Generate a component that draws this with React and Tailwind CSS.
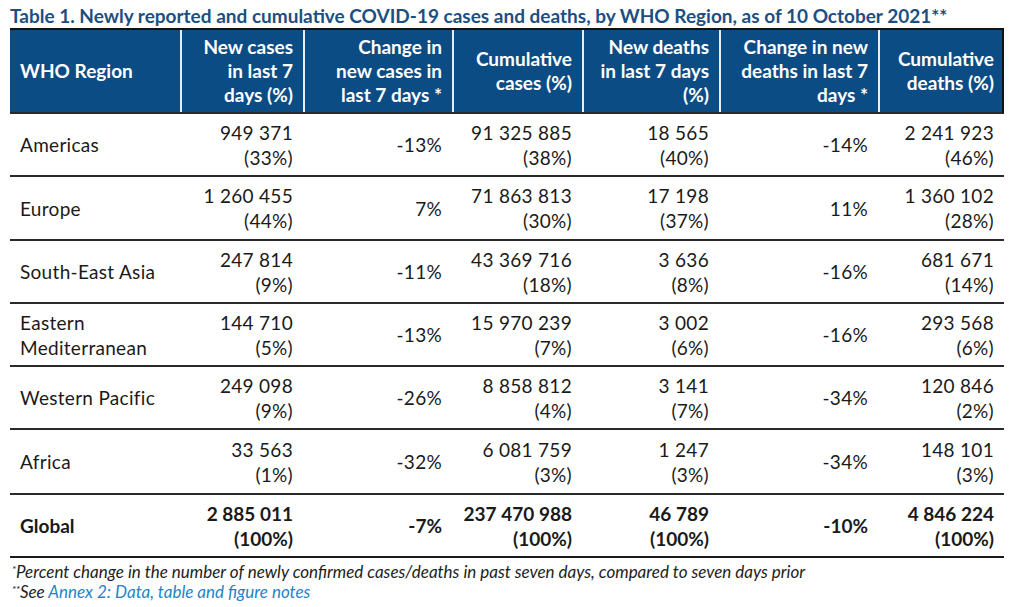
import React from 'react';

const cols = 'grid grid-cols-[170px_123px_149px_130px_137px_159px_126px]';

const rows = [
  ['Americas', ['949 371', '(33%)'], '-13%', ['91 325 885', '(38%)'], ['18 565', '(40%)'], '-14%', ['2 241 923', '(46%)'], 'h-[63px]'],
  ['Europe', ['1 260 455', '(44%)'], '7%', ['71 863 813', '(30%)'], ['17 198', '(37%)'], '11%', ['1 360 102', '(28%)'], 'h-[64px]'],
  ['South-East Asia', ['247 814', '(9%)'], '-11%', ['43 369 716', '(18%)'], ['3 636', '(8%)'], '-16%', ['681 671', '(14%)'], 'h-[63px]'],
  [['Eastern', 'Mediterranean'], ['144 710', '(5%)'], '-13%', ['15 970 239', '(7%)'], ['3 002', '(6%)'], '-16%', ['293 568', '(6%)'], 'h-[63px]'],
  ['Western Pacific', ['249 098', '(9%)'], '-26%', ['8 858 812', '(4%)'], ['3 141', '(7%)'], '-34%', ['120 846', '(2%)'], 'h-[63px]'],
  ['Africa', ['33 563', '(1%)'], '-32%', ['6 081 759', '(3%)'], ['1 247', '(3%)'], '-34%', ['148 101', '(3%)'], 'h-[65px]'],
];

const headers = [
  ['New cases', 'in last 7', 'days (%)'],
  ['Change in', 'new cases in', 'last 7 days *'],
  ['Cumulative', 'cases (%)'],
  ['New deaths', 'in last 7 days', '(%)'],
  ['Change in new', 'deaths in last 7', 'days *'],
  ['Cumulative', 'deaths (%)'],
];

const Lines = ({ v }) =>
  Array.isArray(v) ? v.map((l) => <div key={l}>{l}</div>) : <div>{v}</div>;

const App = () => {
  return (
    <div className="w-[1024px] h-[607px] bg-white text-[#1a1a1a] font-['Lato','Liberation_Sans',sans-serif] pl-[10px] pt-[5px]">
      <div className="text-[19px] font-bold text-[#1c4f80] leading-[22px] whitespace-nowrap">
        Table 1. Newly reported and cumulative COVID-19 cases and deaths, by WHO Region, as of 10 October 2021**
      </div>

      <div className="w-[994px] mt-[1px]">
        {/* header */}
        <div className={`${cols} h-[86px] bg-[#0c4c85] text-white font-bold text-[19px] leading-[24px] border-t-2 border-b-2 border-t-[#111] border-b-[#2a2a2a] border-r-2 border-r-[#111]`}>
          <div className="flex items-center pl-[10px]">WHO Region</div>
          {headers.map((h, i) => (
            <div key={i} className="flex flex-col justify-center items-end text-right pr-[10px] border-l-2 border-l-[#e8eef4] whitespace-nowrap">
              {h.map((l) => (
                <div key={l}>{l}</div>
              ))}
            </div>
          ))}
        </div>

        {/* body */}
        {rows.map((r, i) => (
          <div key={i} className={`${cols} ${r[7]} text-[19px] leading-[25px] tracking-[0.3px] border-b-2 border-[#2a2a2a]`}>
            <div className="flex flex-col justify-center pl-[10px]">
              <Lines v={r[0]} />
            </div>
            {r.slice(1, 7).map((c, j) => (
              <div key={j} className="flex flex-col justify-center items-end text-right pr-[10px]">
                <Lines v={c} />
              </div>
            ))}
          </div>
        ))}

        {/* global */}
        <div className={`${cols} h-[63px] text-[19px] leading-[25px] font-bold border-b-2 border-[#1a1a1a]`}>
          <div className="flex flex-col justify-center pl-[10px]">Global</div>
          {[['2 885 011', '(100%)'], '-7%', ['237 470 988', '(100%)'], ['46 789', '(100%)'], '-10%', ['4 846 224', '(100%)']].map((c, j) => (
            <div key={j} className="flex flex-col justify-center items-end text-right pr-[10px]">
              <Lines v={c} />
            </div>
          ))}
        </div>
      </div>

      {/* notes */}
      <div className="italic text-[17px] leading-[20px] text-[#222] pl-[2px] mt-[4px]">
        <div>
          <sup className="text-[10px]">*</sup>Percent change in the number of newly confirmed cases/deaths in past seven days, compared to seven days prior
        </div>
        <div>
          <sup className="text-[10px]">**</sup>See <span className="text-[#1f84c6]">Annex 2: Data, table and figure notes</span>
        </div>
      </div>
    </div>
  );
};

export default App;
